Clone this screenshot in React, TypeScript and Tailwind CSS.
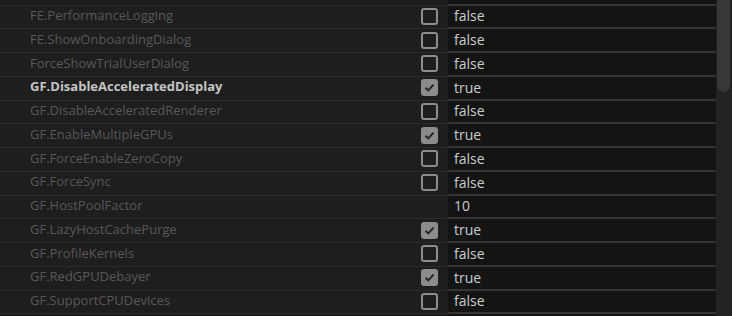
import React from 'react';

type Flag = { name: string; value: string; checked?: boolean; bool?: boolean; bold?: boolean };

const flags: Flag[] = [
  { name: 'FE.PerformanceLogging', value: 'false', bool: true },
  { name: 'FE.ShowOnboardingDialog', value: 'false', bool: true },
  { name: 'ForceShowTrialUserDialog', value: 'false', bool: true },
  { name: 'GF.DisableAcceleratedDisplay', value: 'true', bool: true, checked: true, bold: true },
  { name: 'GF.DisableAcceleratedRenderer', value: 'false', bool: true },
  { name: 'GF.EnableMultipleGPUs', value: 'true', bool: true, checked: true },
  { name: 'GF.ForceEnableZeroCopy', value: 'false', bool: true },
  { name: 'GF.ForceSync', value: 'false', bool: true },
  { name: 'GF.HostPoolFactor', value: '10' },
  { name: 'GF.LazyHostCachePurge', value: 'true', bool: true, checked: true },
  { name: 'GF.ProfileKernels', value: 'false', bool: true },
  { name: 'GF.RedGPUDebayer', value: 'true', bool: true, checked: true },
  { name: 'GF.SupportCPUDevices', value: 'false', bool: true },
  // next row, only its top edge shows in the viewport
  { name: '', value: '', bool: true, checked: true },
];

const Checkbox = ({ checked }: { checked?: boolean }) => (
  <div
    className={`w-[17px] h-[17px] rounded-[3px] border-2 border-[#8c8c8c] flex items-center justify-center ${
      checked ? 'bg-[#8c8c8c]' : ''
    }`}
  >
    {checked && (
      <svg width="11" height="11" viewBox="0 0 11 11">
        <path d="M1.5 5.8 L4.3 8.4 L9.5 2.6" fill="none" stroke="#262626" strokeWidth="2" />
      </svg>
    )}
  </div>
);

const Row = ({ f }: { f: Flag }) => (
  <div className="flex h-[23.75px] shrink-0">
    <div className="w-[415px] border-b border-[#2b2b2b] flex items-center pl-[30px] pb-[2px]">
      <span
        className={`text-[13px] whitespace-nowrap ${
          f.bold ? 'text-[#c4c4c4] font-bold' : 'text-[#585858]'
        }`}
      >
        {f.name}
      </span>
    </div>
    <div className="w-[33px] border-b border-[#2b2b2b] flex items-center pl-[6px] pb-[1px]">
      {f.bool && <Checkbox checked={f.checked} />}
    </div>
    <div className="w-[268px] h-full bg-[#141414] border-b-2 border-[#353535] flex items-center pl-[6px] pb-[1px] rounded-[2px]">
      <span className="text-[14px] text-[#cccccc]">{f.value}</span>
    </div>
  </div>
);

export default function App() {
  return (
    <div
      className="w-[732px] h-[316px] bg-[#1e1e1e] flex overflow-hidden"
      style={{ fontFamily: '"Open Sans", "Noto Sans", sans-serif' }}
    >
      <div className="w-[716px] flex flex-col">
        {/* tail of the row above the viewport */}
        <div className="flex h-[5.5px] shrink-0">
          <div className="w-[448px] border-b border-[#2b2b2b]" />
          <div className="w-[268px] h-full bg-[#141414] border-b-2 border-[#353535]" />
        </div>
        {flags.map((f, i) => (
          <Row key={i} f={f} />
        ))}
      </div>
      <div className="w-[16px] bg-[#232323] pl-[1px]">
        <div className="w-[13px] h-[92px] bg-[#383838] rounded-b-[7px]" />
      </div>
    </div>
  );
}
